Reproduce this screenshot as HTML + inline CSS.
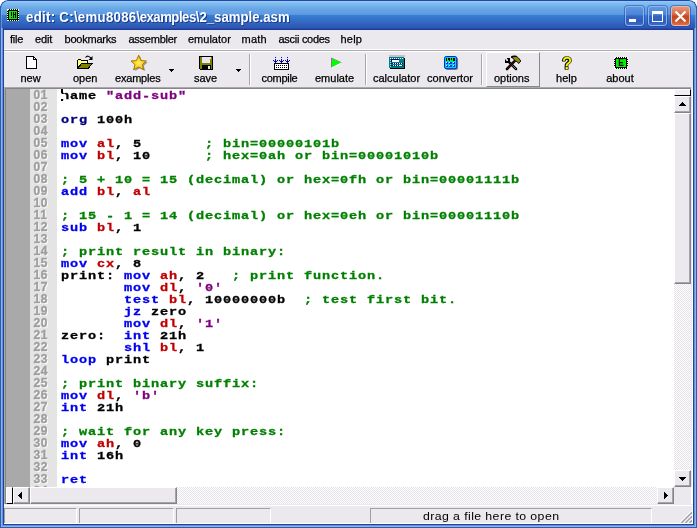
<!DOCTYPE html>
<html>
<head>
<meta charset="utf-8">
<title>edit: C:\emu8086\examples\2_sample.asm</title>
<style>
html,body{margin:0;padding:0;background:#fff;}
body{width:697px;height:528px;overflow:hidden;position:relative;font-family:"Liberation Sans",sans-serif;}
.abs{position:absolute;}
#win{position:absolute;left:0;top:0;width:697px;height:528px;border-radius:8px 8px 0 0;overflow:hidden;background:#EBE9ED;will-change:transform;}
/* title bar */
#title{position:absolute;left:0;top:0;width:697px;height:30px;box-sizing:border-box;border:1px solid #2446AA;border-bottom:0;border-radius:8px 8px 0 0;
 background:linear-gradient(to bottom,#1E3FA0 0px,#1E3FA0 1px,#9CCFF5 1px,#88C3F0 2px,#78B6EC 5px,#68A5E7 9px,#629DE4 13px,#5C97E0 14.5px,#3781D2 15px,#3577CC 18px,#3368C2 22px,#2F5BB6 26px,#2D57B2 28px,#2649A8 28px,#2649A8 29px,#1C3C9C 29px,#1C3C9C 30px);background-origin:border-box;background-repeat:no-repeat;}
#ttext{position:absolute;left:26px;top:8.5px;height:18px;line-height:18px;transform-origin:0 60%;transform:scale(1.015,1.08);color:#fff;font-weight:bold;font-size:13px;white-space:pre;text-shadow:1px 1px 0 #1A3A90;letter-spacing:0px;}
.cap{position:absolute;top:6px;width:19px;height:20px;border-radius:3px;box-sizing:border-box;border:1px solid #8FB4EA;box-shadow:0 0 0 1px rgba(28,64,165,0.5);
 background:linear-gradient(to bottom,#5E98E2 0,#4C84D8 42%,#3466C4 50%,#2F5DBC 80%,#3A6CC8 100%);}
#bclose{background:linear-gradient(to bottom,#E4977A 0,#D86A46 40%,#C8481E 50%,#CC5026 75%,#DC7048 100%);border-color:#EDB6A4;}
/* borders */
.bl{position:absolute;top:30px;height:498px;width:1px;}
.bb{position:absolute;left:0;width:697px;height:1px;}
/* menu */
#menu{position:absolute;left:4px;top:30px;width:689px;height:20px;background:#EBE9ED;}
.mi{position:absolute;top:32px;height:14px;line-height:14px;font-size:11px;color:#000;white-space:pre;-webkit-text-stroke:0.25px #000;}
/* toolbar */
#tb{position:absolute;left:4px;top:52px;width:689px;height:35px;background:#EBE9ED;}
.tl{position:absolute;top:71px;height:14px;line-height:14px;font-size:11px;color:#000;white-space:pre;text-align:center;-webkit-text-stroke:0.25px #000;}
.sep{position:absolute;top:54px;height:31px;width:1px;background:#A8A6AA;border-right:1px solid #fff;}
.dd{position:absolute;top:69px;width:0;height:0;border-left:3px solid transparent;border-right:3px solid transparent;border-top:3px solid #000;}
/* editor */
#ed{position:absolute;left:4px;top:89px;width:670px;height:398px;background:#fff;overflow:hidden;}
#g1{position:absolute;left:0;top:0;width:26px;height:398px;background:#A9A9A9;}
#g2{position:absolute;left:26px;top:0;width:27px;height:398px;background:#E4E4E4;}
.ln{position:absolute;left:29.5px;width:20px;height:12px;line-height:12px;font-size:12px;font-weight:bold;color:#9E9E9E;text-shadow:1px 1px 0 #fff;letter-spacing:0.7px;white-space:pre;-webkit-text-stroke:0.35px #9E9E9E;}
.cl{position:absolute;left:56.5px;height:12px;line-height:12px;font-family:"Liberation Mono",monospace;font-weight:bold;font-size:11.5px;white-space:pre;color:#000;transform-origin:0 0;transform:scale(1.18,1);letter-spacing:0.727px;margin-top:1px;-webkit-text-stroke:0.3px currentColor;}
.k{color:#0000F0;}.d{color:#000080;}.r{color:#C00000;}.c{color:#008000;}.s{color:#800080;}
/* scrollbars */
.btn3d{position:absolute;background:#EBE9ED;box-sizing:border-box;border-top:1px solid #fff;border-left:1px solid #fff;border-right:1px solid #848488;border-bottom:1px solid #848488;}
.btn3d:after{content:"";position:absolute;left:0;top:0;right:0;bottom:0;border-right:1px solid #A6A4A8;border-bottom:1px solid #A6A4A8;}
.track{position:absolute;background-color:#fff;background-image:linear-gradient(45deg,#E5E2E7 25%,transparent 25%,transparent 75%,#E5E2E7 75%),linear-gradient(45deg,#E5E2E7 25%,transparent 25%,transparent 75%,#E5E2E7 75%);background-size:2px 2px;background-position:0 0,1px 1px;}
/* status */
.sp{position:absolute;top:508px;height:16px;box-sizing:border-box;border-top:1px solid #A0A0A4;border-left:1px solid #A0A0A4;border-right:1px solid #fff;border-bottom:1px solid #fff;background:#EBE9ED;}
</style>
</head>
<body>
<div id="win">
  <div id="title"></div>
  <!-- app icon -->
  <svg class="abs" style="left:7px;top:9px" width="12" height="12" viewBox="0 0 12 12" shape-rendering="crispEdges">
    <rect x="0" y="0" width="12" height="12" fill="#fff"/>
    <g fill="#000">
      <rect x="2" y="0" width="1" height="1"/><rect x="4" y="0" width="1" height="1"/><rect x="6" y="0" width="1" height="1"/><rect x="8" y="0" width="1" height="1"/><rect x="10" y="0" width="1" height="1"/>
      <rect x="2" y="11" width="1" height="1"/><rect x="4" y="11" width="1" height="1"/><rect x="6" y="11" width="1" height="1"/><rect x="8" y="11" width="1" height="1"/><rect x="10" y="11" width="1" height="1"/>
      <rect x="0" y="2" width="1" height="1"/><rect x="0" y="4" width="1" height="1"/><rect x="0" y="6" width="1" height="1"/><rect x="0" y="8" width="1" height="1"/><rect x="0" y="10" width="1" height="1"/>
      <rect x="11" y="2" width="1" height="1"/><rect x="11" y="4" width="1" height="1"/><rect x="11" y="6" width="1" height="1"/><rect x="11" y="8" width="1" height="1"/><rect x="11" y="10" width="1" height="1"/>
      <rect x="1" y="1" width="10" height="10"/>
    </g>
    <rect x="2" y="2" width="8" height="8" fill="#00F000"/>
    <g fill="#000">
      <rect x="4" y="3" width="1" height="4"/><rect x="4" y="8" width="1" height="1"/>
      <rect x="6" y="3" width="1" height="6"/><rect x="8" y="3" width="1" height="6"/>
    </g>
    <rect x="7" y="5" width="1" height="1" fill="#000"/>
  </svg>
  <div id="ttext"><span style="letter-spacing:0.3px">edit: C:\emu8086</span><span style="letter-spacing:-0.5px">\examples</span>\2_sample.asm</div>
  <!-- caption buttons -->
  <div class="cap" style="left:625px"><div class="abs" style="left:3px;top:12px;width:7px;height:3px;background:#fff"></div></div>
  <div class="cap" style="left:648px"><div class="abs" style="left:3px;top:4px;width:11px;height:11px;box-sizing:border-box;border:1px solid #fff;border-top-width:3px"></div></div>
  <div class="cap" id="bclose" style="left:671px">
    <svg class="abs" style="left:-1px;top:0px" width="19" height="19" viewBox="0 0 19 19"><path d="M4.5 4.5 L14.5 14.5 M14.5 4.5 L4.5 14.5" stroke="#fff" stroke-width="2.2" fill="none"/></svg>
  </div>

  <!-- side borders -->
  <div class="abs" style="left:0;top:6px;width:1px;height:22px;background:#2B5CB8"></div>
  <div class="abs" style="left:696px;top:6px;width:1px;height:22px;background:#2B5CB8"></div>
  <div class="abs" style="left:1px;top:8px;width:1px;height:20px;background:rgba(138,180,228,0.55)"></div>
  <div class="abs" style="left:695px;top:8px;width:1px;height:20px;background:rgba(138,180,228,0.55)"></div>
  <div class="abs" style="left:0;top:28px;width:697px;height:500px;box-sizing:border-box;border:1px solid #2B5CB8;border-top:0"></div>
  <div class="abs" style="left:1px;top:28px;width:695px;height:499px;box-sizing:border-box;border:1px solid #8AB4E4;border-top:0"></div>
  <div class="abs" style="left:2px;top:28px;width:693px;height:498px;box-sizing:border-box;border:1px solid #6492D8;border-top:0"></div>
  <div class="abs" style="left:3px;top:28px;width:691px;height:497px;box-sizing:border-box;border:1px solid #24409A;border-top:0"></div>
  <!-- menu -->
  <div id="menu"></div>
  <div class="mi" style="left:10px;letter-spacing:-0.2px">file</div>
  <div class="mi" style="left:35px;letter-spacing:-0.15px">edit</div>
  <div class="mi" style="left:64.5px;letter-spacing:-0.22px">bookmarks</div>
  <div class="mi" style="left:128.5px;letter-spacing:-0.25px">assembler</div>
  <div class="mi" style="left:188px">emulator</div>
  <div class="mi" style="left:241.6px;letter-spacing:0.15px">math</div>
  <div class="mi" style="left:278.5px;letter-spacing:-0.28px">ascii codes</div>
  <div class="mi" style="left:340.6px;letter-spacing:0.15px">help</div>
  <div class="abs" style="left:4px;top:49px;width:689px;height:1px;background:#fff"></div>
  <div class="abs" style="left:4px;top:50px;width:689px;height:1px;background:#ABABAE"></div>
  <div class="abs" style="left:4px;top:51px;width:689px;height:1px;background:#fff"></div>

  <!-- toolbar -->
  <div id="tb"></div>
  <!--icons-->
  <!-- options raised button -->
  <div class="abs" style="left:486px;top:52px;width:54px;height:35px;box-sizing:border-box;border-top:1px solid #fff;border-left:1px solid #fff;border-right:1px solid #8A888C;border-bottom:1px solid #8A888C;"></div>
  <!-- new -->
  <svg class="abs" style="left:26px;top:56px" width="11" height="13" viewBox="0 0 11 13" shape-rendering="crispEdges">
    <path d="M0.5 0.5 H7.5 L10.5 3.5 V12.5 H0.5 Z" fill="#fff" stroke="#000"/>
    <path d="M7.5 0.5 V3.5 H10.5" fill="none" stroke="#000"/>
  </svg>
  <!-- open -->
  <svg class="abs" style="left:77px;top:55px" width="17" height="15" viewBox="0 0 17 15">
    <g shape-rendering="crispEdges">
    <path d="M0.5 13.5 V5.5 L1.5 4.5 H3.5 L4.5 5.5 H10.5 V8.5" fill="#FFFF60" stroke="#000"/>
    <path d="M1 6 H10 V8 H4 L1 12 Z" fill="#FFFF80"/>
    <path d="M0.5 13.5 L4.5 8.5 H15.5 L11 13.5 Z" fill="#808000" stroke="#000"/>
    </g>
    <path d="M8.5 2.5 Q11 -0.5 14 3.2" fill="none" stroke="#000" stroke-width="1.1"/>
    <path d="M15.5 1 V5 H11.5 Z" fill="#000"/>
  </svg>
  <!-- examples star -->
  <svg class="abs" style="left:130px;top:54px" width="18" height="17" viewBox="0 0 18 17">
    <defs><radialGradient id="sg" cx="50%" cy="55%" r="55%"><stop offset="0" stop-color="#FFF060"/><stop offset="0.6" stop-color="#F8D020"/><stop offset="1" stop-color="#D09800"/></radialGradient></defs>
    <path d="M9.3 2 L11.6 7.2 L17 7.6 L13 11.2 L14.4 16.4 L9.3 13.6 L4.2 16.4 L5.6 11.2 L1.6 7.6 L7 7.2 Z" fill="#5A5A70" opacity="0.55" transform="translate(0.8,0.6)"/>
    <path d="M8.7 1.2 L11 6.6 L16.4 7 L12.4 10.6 L13.8 15.8 L8.7 13 L3.6 15.8 L5 10.6 L1 7 L6.4 6.6 Z" fill="url(#sg)" stroke="#A87800" stroke-width="1" stroke-linejoin="round"/>
  </svg>
  <!-- save -->
  <svg class="abs" style="left:199px;top:56px" width="14" height="14" viewBox="0 0 14 14" shape-rendering="crispEdges">
    <path d="M0.5 0.5 H13.5 V13.5 H1.5 L0.5 12.5 Z" fill="#808000" stroke="#000"/>
    <rect x="3" y="1" width="8" height="6" fill="#E8E8EC"/>
    <rect x="11" y="1" width="1" height="2" fill="#E8E8EC"/>
    <rect x="3" y="9" width="9" height="5" fill="#000"/>
    <rect x="9" y="10" width="2" height="3" fill="#E8E8EC"/>
  </svg>
  <!-- compile -->
  <svg class="abs" style="left:274px;top:56px;overflow:visible" width="16" height="15" viewBox="0 0 16 15" shape-rendering="crispEdges">
    <rect x="0.5" y="7.5" width="14" height="6" fill="#fff" stroke="#000"/>
    <g fill="#000">
      <rect x="2" y="9" width="1" height="1"/><rect x="4" y="9" width="1" height="1"/><rect x="6" y="9" width="1" height="1"/><rect x="8" y="9" width="1" height="1"/><rect x="10" y="9" width="1" height="1"/><rect x="12" y="9" width="1" height="1"/>
      <rect x="2" y="11" width="1" height="1"/><rect x="4" y="11" width="1" height="1"/><rect x="6" y="11" width="1" height="1"/><rect x="8" y="11" width="1" height="1"/><rect x="10" y="11" width="1" height="1"/><rect x="12" y="11" width="1" height="1"/>
    </g>
    <g fill="#0000A8"><rect x="1" y="1" width="1" height="1"/><rect x="1" y="3" width="1" height="4"/><rect x="-1" y="4" width="1" height="1"/><rect x="3" y="4" width="1" height="1"/><rect x="0" y="5" width="3" height="1"/><rect x="7" y="1" width="1" height="1"/><rect x="7" y="3" width="1" height="4"/><rect x="5" y="4" width="1" height="1"/><rect x="9" y="4" width="1" height="1"/><rect x="6" y="5" width="3" height="1"/><rect x="13" y="1" width="1" height="1"/><rect x="13" y="3" width="1" height="4"/><rect x="11" y="4" width="1" height="1"/><rect x="15" y="4" width="1" height="1"/><rect x="12" y="5" width="3" height="1"/></g>
  </svg>
  <!-- emulate -->
  <svg class="abs" style="left:330px;top:57px" width="13" height="12" viewBox="0 0 13 12">
    <path d="M1.2 1 L11.4 5.7" stroke="#8A7A8A" stroke-width="1" fill="none"/>
    <path d="M1.5 1 V10.4" stroke="#8A7A8A" stroke-width="1" fill="none"/>
    <path d="M2 1.6 L11 5.7 L2 10.2 Z" fill="#00FF00"/>
    <path d="M2 10.8 L11.2 6.3" stroke="#fff" stroke-width="1" fill="none"/>
  </svg>
  <!-- calculator -->
  <svg class="abs" style="left:389px;top:55px" width="16" height="14" viewBox="0 0 16 14" shape-rendering="crispEdges">
    <rect x="0" y="0" width="16" height="2" fill="#C4C2C6"/>
    <rect x="0" y="2" width="15" height="11" fill="#008080"/>
    <rect x="15" y="3" width="1" height="11" fill="#000"/><rect x="1" y="13" width="15" height="1" fill="#000"/>
    <rect x="2" y="4" width="12" height="8" fill="#000080"/>
    <rect x="10" y="4" width="4" height="3" fill="#008080"/>
    <g fill="#E0FFFF">
      <rect x="1" y="3" width="1" height="1"/><rect x="3" y="3" width="1" height="1"/><rect x="5" y="3" width="1" height="1"/><rect x="7" y="3" width="1" height="1"/><rect x="9" y="3" width="1" height="1"/><rect x="11" y="3" width="1" height="1"/><rect x="13" y="3" width="1" height="1"/>
      </g><g fill="#40FFFF"><rect x="1" y="5" width="1" height="1"/><rect x="1" y="7" width="1" height="1"/><rect x="1" y="9" width="1" height="1"/><rect x="1" y="11" width="1" height="1"/>
    </g>
    <rect x="2" y="7" width="12" height="1" fill="#008888"/><rect x="2" y="9" width="12" height="1" fill="#008888"/><rect x="2" y="11" width="12" height="1" fill="#006878"/>
    <rect x="3" y="5" width="7" height="2" fill="#fff"/>
    <g fill="#fff">
      <rect x="4" y="8" width="1" height="1"/><rect x="6" y="8" width="1" height="1"/><rect x="8" y="8" width="1" height="1"/><rect x="10" y="8" width="1" height="1"/><rect x="12" y="8" width="1" height="1"/>
      <rect x="4" y="10" width="1" height="1"/><rect x="6" y="10" width="1" height="1"/><rect x="8" y="10" width="1" height="1"/><rect x="10" y="10" width="3" height="1"/>
    </g>
  </svg>
  <!-- convertor -->
  <svg class="abs" style="left:444px;top:56px" width="15" height="15" viewBox="0 0 15 15">
    <rect x="1.5" y="1.5" width="12.6" height="12.4" rx="2" fill="#85857A"/>
    <rect x="0.5" y="0.5" width="12.2" height="12.2" rx="1.8" fill="#00D4EC" stroke="#0028C8" stroke-width="1"/>
    <g shape-rendering="crispEdges">
    <rect x="2" y="2" width="9" height="3" fill="#000"/>
    <rect x="3" y="2" width="1" height="2" fill="#00FF00"/><rect x="3" y="4" width="2" height="1" fill="#00FF00"/><rect x="6" y="2" width="1" height="2" fill="#00FF00"/><rect x="6" y="4" width="2" height="1" fill="#00FF00"/><rect x="8" y="2" width="1" height="3" fill="#00FF00"/>
    <g fill="#0030FF">
      <rect x="2" y="6" width="2" height="2"/><rect x="5" y="6" width="3" height="2"/><rect x="9" y="6" width="2" height="2"/>
      <rect x="2" y="9" width="2" height="2"/><rect x="5" y="9" width="3" height="2"/><rect x="9" y="9" width="2" height="2"/>
    </g>
    <g fill="#fff">
      <rect x="2" y="6" width="1" height="1"/><rect x="5" y="6" width="1" height="1"/><rect x="9" y="6" width="1" height="1"/>
      <rect x="2" y="9" width="1" height="1"/><rect x="5" y="9" width="1" height="1"/><rect x="9" y="9" width="1" height="1"/>
    </g>
    </g>
  </svg>
  <!-- options: wrench + hammer -->
  <svg class="abs" style="left:504px;top:55px" width="18" height="16" viewBox="0 0 18 16">
    <path d="M5.4 7.4 L12 14" stroke="#000" stroke-width="2.5" fill="none" stroke-linecap="round"/>
    <path d="M5.8 7.8 L12 14" stroke="#E4E4E8" stroke-width="0.9" fill="none" stroke-dasharray="0.8 0.7"/>
    <path d="M3 3 H6 V7.4 L5 8 H1 V4.6 H2.4 V5.8 H3.9 V4.5 H3 Z" fill="#000"/>
    <rect x="2.3" y="4.4" width="1.5" height="1.4" fill="#fff"/>
    <path d="M10.6 6.2 L3 14" stroke="#000" stroke-width="2.6" fill="none" stroke-linecap="round"/>
    <path d="M10.4 6.6 L3.2 13.8" stroke="#C80000" stroke-width="0.9" fill="none" stroke-dasharray="0.9 0.5"/>
    <path d="M7 2 L9 1 H12 L14.5 3 L16.8 6 L14.6 8.6 L13.4 6.8 L11.4 6.2 L10 4.2 L8.4 3 Z" fill="#8E8A0E" stroke="#000" stroke-width="0.9" stroke-linejoin="round"/>
    <path d="M7 2 L9 1 H12 L13 2 H9.4 L8.4 3 Z" fill="#000"/>
  </svg>
  <!-- help ? -->
  <svg class="abs" style="left:558px;top:53px" width="18" height="19" viewBox="0 0 18 19">
    <text x="9" y="16.2" text-anchor="middle" font-family="Liberation Sans, sans-serif" font-weight="bold" font-size="16" fill="#000" stroke="#000" stroke-width="1.7" stroke-linejoin="round">?</text>
    <text x="9" y="16.2" text-anchor="middle" font-family="Liberation Sans, sans-serif" font-weight="normal" font-size="16" fill="#FFFF00" stroke="#FFFF00" stroke-width="0.5">?</text>
  </svg>
  <!-- about chip -->
  <svg class="abs" style="left:614px;top:57px" width="14" height="12" viewBox="0 0 14 12" shape-rendering="crispEdges">
    <rect x="0" y="0" width="14" height="12" fill="#fff"/>
    <g fill="#000">
      <rect x="2" y="0" width="1" height="1"/><rect x="4" y="0" width="1" height="1"/><rect x="6" y="0" width="1" height="1"/><rect x="8" y="0" width="1" height="1"/><rect x="10" y="0" width="1" height="1"/><rect x="12" y="0" width="1" height="1"/>
      <rect x="2" y="11" width="1" height="1"/><rect x="4" y="11" width="1" height="1"/><rect x="6" y="11" width="1" height="1"/><rect x="8" y="11" width="1" height="1"/><rect x="10" y="11" width="1" height="1"/><rect x="12" y="11" width="1" height="1"/>
      <rect x="0" y="2" width="1" height="1"/><rect x="0" y="4" width="1" height="1"/><rect x="0" y="6" width="1" height="1"/><rect x="0" y="8" width="1" height="1"/>
      <rect x="13" y="2" width="1" height="1"/><rect x="13" y="4" width="1" height="1"/><rect x="13" y="6" width="1" height="1"/><rect x="13" y="8" width="1" height="1"/>
    </g>
    <rect x="1.5" y="1.5" width="11" height="9" fill="#00F000" stroke="#000"/>
    </svg>
  <div class="abs" style="left:614px;top:57px;width:14px;height:12px;line-height:12.5px;text-align:center;font-size:9.5px;font-weight:bold;color:#000;transform:scale(0.86,1.06)">E</div>
<!--/icons-->
  <div class="tl" style="left:20px;width:21px">new</div>
  <div class="tl" style="left:73px;width:23px">open</div>
  <div class="tl" style="left:115px;width:45px;letter-spacing:-0.2px">examples</div>
  <div class="tl" style="left:194px;width:22px">save</div>
  <div class="tl" style="left:261.5px;width:36px;letter-spacing:-0.3px">compile</div>
  <div class="tl" style="left:315px;width:38px">emulate</div>
  <div class="tl" style="left:373px;width:46px">calculator</div>
  <div class="tl" style="left:427px;width:46px">convertor</div>
  <div class="tl" style="left:494px;width:35px">options</div>
  <div class="tl" style="left:556px;width:21px">help</div>
  <div class="tl" style="left:606px;width:28px">about</div>
  <svg class="abs" style="left:169px;top:69px" width="5" height="3" shape-rendering="crispEdges"><path d="M0 0H5V1H4V2H3V3H2V2H1V1H0Z" fill="#000"/></svg>
  <svg class="abs" style="left:236px;top:69px" width="5" height="3" shape-rendering="crispEdges"><path d="M0 0H5V1H4V2H3V3H2V2H1V1H0Z" fill="#000"/></svg>
  <div class="sep" style="left:249px"></div>
  <div class="sep" style="left:365px"></div>
  <div class="sep" style="left:481px"></div>
  <div class="abs" style="left:4px;top:87px;width:687px;height:1px;background:#A8A8AC"></div>
  <div class="abs" style="left:4px;top:88px;width:687px;height:1px;background:#85858A"></div>

  <!-- editor -->
  <div id="ed">
    <div id="g1"></div><div id="g2"></div>
    <div id="lines">
    <div class="ln" style="top:0px">01</div>
    <div class="cl" style="top:0px">name <span class="s">"add-sub"</span></div>
    <div class="ln" style="top:12px">02</div>
    <div class="ln" style="top:24px">03</div>
    <div class="cl" style="top:24px"><span class="d">org</span> 100h</div>
    <div class="ln" style="top:36px">04</div>
    <div class="ln" style="top:48px">05</div>
    <div class="cl" style="top:48px"><span class="k">mov</span> <span class="r">al</span>, 5       <span class="c">; bin=00000101b</span></div>
    <div class="ln" style="top:60px">06</div>
    <div class="cl" style="top:60px"><span class="k">mov</span> <span class="r">bl</span>, 10      <span class="c">; hex=0ah or bin=00001010b</span></div>
    <div class="ln" style="top:72px">07</div>
    <div class="ln" style="top:84px">08</div>
    <div class="cl" style="top:84px"><span class="c">; 5 + 10 = 15 (decimal) or hex=0fh or bin=00001111b</span></div>
    <div class="ln" style="top:96px">09</div>
    <div class="cl" style="top:96px"><span class="k">add</span> <span class="r">bl</span>, <span class="r">al</span></div>
    <div class="ln" style="top:108px">10</div>
    <div class="ln" style="top:120px">11</div>
    <div class="cl" style="top:120px"><span class="c">; 15 - 1 = 14 (decimal) or hex=0eh or bin=00001110b</span></div>
    <div class="ln" style="top:132px">12</div>
    <div class="cl" style="top:132px"><span class="k">sub</span> <span class="r">bl</span>, 1</div>
    <div class="ln" style="top:144px">13</div>
    <div class="ln" style="top:156px">14</div>
    <div class="cl" style="top:156px"><span class="c">; print result in binary:</span></div>
    <div class="ln" style="top:168px">15</div>
    <div class="cl" style="top:168px"><span class="k">mov</span> <span class="r">cx</span>, 8</div>
    <div class="ln" style="top:180px">16</div>
    <div class="cl" style="top:180px">print: <span class="k">mov</span> <span class="r">ah</span>, 2   <span class="c">; print function.</span></div>
    <div class="ln" style="top:192px">17</div>
    <div class="cl" style="top:192px">       <span class="k">mov</span> <span class="r">dl</span>, <span class="s">'0'</span></div>
    <div class="ln" style="top:204px">18</div>
    <div class="cl" style="top:204px">       <span class="k">test</span> <span class="r">bl</span>, 10000000b  <span class="c">; test first bit.</span></div>
    <div class="ln" style="top:216px">19</div>
    <div class="cl" style="top:216px">       <span class="k">jz</span> zero</div>
    <div class="ln" style="top:228px">20</div>
    <div class="cl" style="top:228px">       <span class="k">mov</span> <span class="r">dl</span>, <span class="s">'1'</span></div>
    <div class="ln" style="top:240px">21</div>
    <div class="cl" style="top:240px">zero:  <span class="k">int</span> 21h</div>
    <div class="ln" style="top:252px">22</div>
    <div class="cl" style="top:252px">       <span class="k">shl</span> <span class="r">bl</span>, 1</div>
    <div class="ln" style="top:264px">23</div>
    <div class="cl" style="top:264px"><span class="k">loop</span> print</div>
    <div class="ln" style="top:276px">24</div>
    <div class="ln" style="top:288px">25</div>
    <div class="cl" style="top:288px"><span class="c">; print binary suffix:</span></div>
    <div class="ln" style="top:300px">26</div>
    <div class="cl" style="top:300px"><span class="k">mov</span> <span class="r">dl</span>, <span class="s">'b'</span></div>
    <div class="ln" style="top:312px">27</div>
    <div class="cl" style="top:312px"><span class="k">int</span> 21h</div>
    <div class="ln" style="top:324px">28</div>
    <div class="ln" style="top:336px">29</div>
    <div class="cl" style="top:336px"><span class="c">; wait for any key press:</span></div>
    <div class="ln" style="top:348px">30</div>
    <div class="cl" style="top:348px"><span class="k">mov</span> <span class="r">ah</span>, 0</div>
    <div class="ln" style="top:360px">31</div>
    <div class="cl" style="top:360px"><span class="k">int</span> 16h</div>
    <div class="ln" style="top:372px">32</div>
    <div class="ln" style="top:384px">33</div>
    <div class="cl" style="top:384px"><span class="k">ret</span></div>
    <div class="ln" style="top:396px">34</div>
    <div class="abs" style="left:57px;top:5px;width:3.6px;height:5px;background:#fff"></div>
    <div class="abs" style="left:57px;top:0;width:2px;height:4px;background:#000"></div>
    <div class="abs" style="left:57px;top:10px;width:2px;height:2px;background:#000"></div>
    </div><!--/lines-->
  </div>

  <!-- vertical scrollbar -->
  <div class="track" style="left:674px;top:89px;width:17px;height:398px"></div>
  <div class="abs" style="left:691px;top:89px;width:2px;height:416px;background:#fff"></div>
  <div class="abs" style="left:691px;top:89px;width:1px;height:398px;background:#E6E6EC"></div>
  <!-- splitter -->
  <div class="abs" style="left:674px;top:89px;width:17px;height:7px;background:#F0EEF2;box-sizing:border-box;border-top:1px solid #fff;border-left:1px solid #fff;border-right:1px solid #000;border-bottom:1px solid #000"></div>
  <!-- up -->
  <div class="btn3d" style="left:674px;top:96px;width:17px;height:17px"><svg class="abs" style="left:4px;top:5px" width="7" height="4" shape-rendering="crispEdges"><path d="M3 0H4V1H5V2H6V3H7V4H0V3H1V2H2V1H3Z" fill="#000"/></svg></div>
  <!-- v thumb -->
  <div class="btn3d" style="left:674px;top:113px;width:17px;height:171px"></div>
  <!-- down -->
  <div class="btn3d" style="left:674px;top:470px;width:17px;height:17px"><svg class="abs" style="left:4px;top:6px" width="7" height="4" shape-rendering="crispEdges"><path d="M0 0H7V1H6V2H5V3H4V4H3V3H2V2H1V1H0Z" fill="#000"/></svg></div>
  <!-- corner -->
  <div class="abs" style="left:674px;top:487px;width:17px;height:17px;background:#EBE9ED"></div>
  <!-- horizontal scrollbar -->
  <div class="track" style="left:4px;top:487px;width:670px;height:17px"></div>
  <div class="abs" style="left:4px;top:504px;width:689px;height:1px;background:#EBE9ED"></div>
  <!-- h splitter -->
  <div class="abs" style="left:6px;top:487px;width:7px;height:17px;background:#F4F3F6;box-sizing:border-box;border-top:1px solid #fff;border-left:1px solid #fff;border-right:1px solid #000;border-bottom:1px solid #000"></div>
  <div class="abs" style="left:4px;top:87px;width:1px;height:417px;background:#ACAAAD"></div>
  <div class="abs" style="left:5px;top:88px;width:1px;height:416px;background:#86868A"></div>
  <!-- left -->
  <div class="btn3d" style="left:13px;top:487px;width:17px;height:17px"><svg class="abs" style="left:4px;top:4px" width="4" height="7" shape-rendering="crispEdges"><path d="M3 0H4V7H3V6H2V5H1V4H0V3H1V2H2V1H3Z" fill="#000"/></svg></div>
  <!-- h thumb -->
  <div class="btn3d" style="left:30px;top:487px;width:147px;height:17px"></div>
  <!-- right -->
  <div class="btn3d" style="left:657px;top:487px;width:17px;height:17px"><svg class="abs" style="left:6px;top:4px" width="4" height="7" shape-rendering="crispEdges"><path d="M0 0H1V1H2V2H3V3H4V4H3V5H2V6H1V7H0Z" fill="#000"/></svg></div>

  <!-- status bar -->
  <div class="abs" style="left:4px;top:505px;width:689px;height:1px;background:#fff"></div>
  <div class="sp" style="left:4px;width:73px"></div>
  <div class="sp" style="left:79px;width:95px"></div>
  <div class="sp" style="left:176px;width:95px"></div>
  <div class="sp" style="left:370px;width:282px"></div>
  <div class="abs" style="left:4px;top:523px;width:689px;height:1px;background:#fff"></div>
  <div class="abs" style="left:692px;top:505px;width:1px;height:19px;background:#fff"></div>
  <svg class="abs" style="left:680px;top:511px" width="12" height="12" viewBox="0 0 12 12">
    <g stroke="#fff" stroke-width="1.2" fill="none"><path d="M0.3 11.3 L11.3 0.3"/><path d="M4.3 11.3 L11.3 4.3"/><path d="M8.3 11.3 L11.3 8.3"/></g>
    <g stroke="#A2A0A6" stroke-width="1.5" fill="none"><path d="M1.3 12 L12 1.3"/><path d="M5.3 12 L12 5.3"/><path d="M9.3 12 L12 9.3"/></g>
  </svg>
  <div class="abs" style="left:422.6px;top:509px;height:14px;line-height:14px;font-size:11px;white-space:pre;transform-origin:0 0;transform:scaleX(1.12);letter-spacing:0.36px">drag a file here to open</div>
</div>
</body>
</html>
